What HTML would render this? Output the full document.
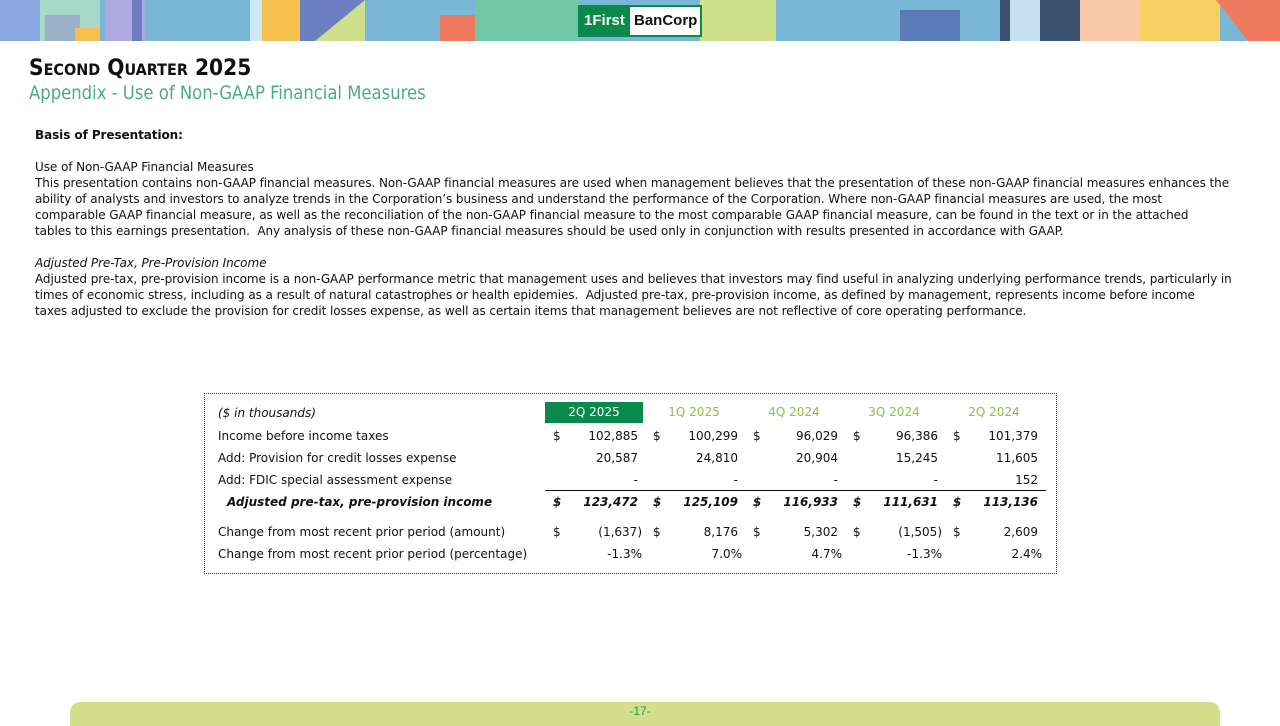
<!DOCTYPE html>
<html><head><meta charset="utf-8"><style>
*{margin:0;padding:0;box-sizing:border-box}
body{width:1280px;height:720px;position:relative;overflow:hidden;background:#fff;font-family:"DejaVu Sans","Liberation Sans",sans-serif;color:#111}
.b{position:absolute}
.ban{position:absolute;left:0;top:0;width:1280px;height:41px;overflow:hidden;background:#7ab6d6}
.t{position:absolute;white-space:nowrap;font-size:12px;letter-spacing:-0.07px}
.tb{position:absolute;left:204px;top:393px;width:853px;height:181px;border:1px dotted #333}
.c{position:absolute;font-size:12px;white-space:nowrap}
.r{text-align:right;width:90px}
.h{color:#8cc04a;width:98px;text-align:center}
</style></head><body>
<div class="ban">
<div class="b" style="left:0;top:0;width:40px;height:41px;background:#8aa8e0"></div>
<div class="b" style="left:40px;top:0;width:60px;height:41px;background:#a8d8c8"></div>
<div class="b" style="left:45px;top:15px;width:35px;height:26px;background:#9cb0c8"></div>
<div class="b" style="left:75px;top:28px;width:25px;height:13px;background:#f6c050"></div>
<div class="b" style="left:105px;top:0;width:40px;height:41px;background:#b0a8e0"></div>
<div class="b" style="left:132px;top:0;width:10px;height:41px;background:#6c7ec0"></div>
<div class="b" style="left:145px;top:0;width:105px;height:41px;background:#7ab6d6"></div>
<div class="b" style="left:250px;top:0;width:12px;height:41px;background:#d0e8f4"></div>
<div class="b" style="left:262px;top:0;width:38px;height:41px;background:#f6c050"></div>
<div class="b" style="left:300px;top:0;width:65px;height:41px;background:#6c7ec0"></div>
<div class="b" style="left:315px;top:0;width:50px;height:41px;background:#cfe08a;clip-path:polygon(100% 0,100% 100%,0 100%)"></div>
<div class="b" style="left:365px;top:0;width:110px;height:41px;background:#7ab6d6"></div>
<div class="b" style="left:440px;top:15px;width:40px;height:26px;background:#f07a60"></div>
<div class="b" style="left:475px;top:0;width:105px;height:41px;background:#70c8a8"></div>
<div class="b" style="left:700px;top:0;width:120px;height:41px;background:#cfe08a"></div>
<div class="b" style="left:776px;top:0;width:190px;height:41px;background:#7ab6d6"></div>
<div class="b" style="left:900px;top:10px;width:60px;height:31px;background:#5a7ab8"></div>
<div class="b" style="left:1000px;top:0;width:80px;height:41px;background:#3c5070"></div>
<div class="b" style="left:1010px;top:0;width:30px;height:41px;background:#c8e0f4"></div>
<div class="b" style="left:1080px;top:0;width:60px;height:41px;background:#f8c8a8"></div>
<div class="b" style="left:1140px;top:0;width:80px;height:41px;background:#f6d060"></div>
<div class="b" style="left:1200px;top:0;width:80px;height:41px;background:#f07a60;clip-path:polygon(20% 0,100% 0,100% 100%,60% 100%)"></div>
<div class="b" style="left:578px;top:5px;width:124px;height:32px;background:#fff;border:2px solid #0a8a4a"></div>
<div class="b" style="left:578px;top:5px;width:52px;height:32px;background:#0a8a4a;color:#fff;font:bold 15px 'Liberation Sans',sans-serif;line-height:32px;padding-left:6px">1First</div>
<div class="b" style="left:634px;top:5px;color:#111;font:bold 15px 'Liberation Sans',sans-serif;line-height:32px">BanCorp</div>
</div>
<div class="b" style="left:29px;top:55px;font-weight:bold;font-size:22.5px;font-variant:small-caps;font-family:'DejaVu Sans Condensed','DejaVu Sans',sans-serif">Second Quarter 2025</div>
<div class="b" style="left:29px;top:83px;font-size:18.3px;color:#4aab8a;font-family:'DejaVu Sans Condensed','DejaVu Sans',sans-serif">Appendix - Use of Non-GAAP Financial Measures</div>
<div class="t" style="left:35px;top:128px;font-weight:bold">Basis of Presentation:</div>
<div class="t" style="left:35px;top:160px">Use of Non-GAAP Financial Measures</div>
<div class="t" style="left:35px;top:176px">This presentation contains non-GAAP financial measures. Non-GAAP financial measures are used when management believes that the presentation of these non-GAAP financial measures enhances the</div>
<div class="t" style="left:35px;top:192px">ability of analysts and investors to analyze trends in the Corporation’s business and understand the performance of the Corporation. Where non-GAAP financial measures are used, the most</div>
<div class="t" style="left:35px;top:208px">comparable GAAP financial measure, as well as the reconciliation of the non-GAAP financial measure to the most comparable GAAP financial measure, can be found in the text or in the attached</div>
<div class="t" style="left:35px;top:224px">tables to this earnings presentation.&nbsp; Any analysis of these non-GAAP financial measures should be used only in conjunction with results presented in accordance with GAAP.</div>
<div class="t" style="left:35px;top:256px;font-style:italic">Adjusted Pre-Tax, Pre-Provision Income</div>
<div class="t" style="left:35px;top:272px">Adjusted pre-tax, pre-provision income is a non-GAAP performance metric that management uses and believes that investors may find useful in analyzing underlying performance trends, particularly in</div>
<div class="t" style="left:35px;top:288px">times of economic stress, including as a result of natural catastrophes or health epidemies.&nbsp; Adjusted pre-tax, pre-provision income, as defined by management, represents income before income</div>
<div class="t" style="left:35px;top:304px">taxes adjusted to exclude the provision for credit losses expense, as well as certain items that management believes are not reflective of core operating performance.</div>
<div class="tb"></div>
<div class="b" style="left:545px;top:402px;width:98px;height:21px;background:#0a8a4a"></div>
<div class="b" style="left:545px;top:490px;width:501px;height:1px;background:#111"></div>
<div class="c" style="left:218px;top:406px;font-style:italic">($ in thousands)</div>
<div class="c h" style="left:545px;top:405px;color:#fff">2Q 2025</div>
<div class="c h" style="left:645px;top:405px">1Q 2025</div>
<div class="c h" style="left:745px;top:405px">4Q 2024</div>
<div class="c h" style="left:845px;top:405px">3Q 2024</div>
<div class="c h" style="left:945px;top:405px">2Q 2024</div>
<div class="c" style="left:218px;top:429px">Income before income taxes</div>
<div class="c" style="left:218px;top:451px">Add: Provision for credit losses expense</div>
<div class="c" style="left:218px;top:473px">Add: FDIC special assessment expense</div>
<div class="c" style="left:227px;top:495px;font-weight:bold;font-style:italic">Adjusted pre-tax, pre-provision income</div>
<div class="c" style="left:218px;top:525px">Change from most recent prior period (amount)</div>
<div class="c" style="left:218px;top:547px">Change from most recent prior period (percentage)</div>
<div class="c" style="left:553px;top:429px">$</div><div class="c r" style="left:548px;top:429px">102,885</div>
<div class="c r" style="left:548px;top:451px">20,587</div><div class="c r" style="left:548px;top:473px">-</div>
<div class="c" style="left:553px;top:495px;font-weight:bold;font-style:italic">$</div><div class="c r" style="left:548px;top:495px;font-weight:bold;font-style:italic">123,472</div>
<div class="c" style="left:553px;top:525px">$</div><div class="c r" style="left:552px;top:525px">(1,637)</div>
<div class="c r" style="left:552px;top:547px">-1.3%</div>
<div class="c" style="left:653px;top:429px">$</div><div class="c r" style="left:648px;top:429px">100,299</div>
<div class="c r" style="left:648px;top:451px">24,810</div><div class="c r" style="left:648px;top:473px">-</div>
<div class="c" style="left:653px;top:495px;font-weight:bold;font-style:italic">$</div><div class="c r" style="left:648px;top:495px;font-weight:bold;font-style:italic">125,109</div>
<div class="c" style="left:653px;top:525px">$</div><div class="c r" style="left:648px;top:525px">8,176</div>
<div class="c r" style="left:652px;top:547px">7.0%</div>
<div class="c" style="left:753px;top:429px">$</div><div class="c r" style="left:748px;top:429px">96,029</div>
<div class="c r" style="left:748px;top:451px">20,904</div><div class="c r" style="left:748px;top:473px">-</div>
<div class="c" style="left:753px;top:495px;font-weight:bold;font-style:italic">$</div><div class="c r" style="left:748px;top:495px;font-weight:bold;font-style:italic">116,933</div>
<div class="c" style="left:753px;top:525px">$</div><div class="c r" style="left:748px;top:525px">5,302</div>
<div class="c r" style="left:752px;top:547px">4.7%</div>
<div class="c" style="left:853px;top:429px">$</div><div class="c r" style="left:848px;top:429px">96,386</div>
<div class="c r" style="left:848px;top:451px">15,245</div><div class="c r" style="left:848px;top:473px">-</div>
<div class="c" style="left:853px;top:495px;font-weight:bold;font-style:italic">$</div><div class="c r" style="left:848px;top:495px;font-weight:bold;font-style:italic">111,631</div>
<div class="c" style="left:853px;top:525px">$</div><div class="c r" style="left:852px;top:525px">(1,505)</div>
<div class="c r" style="left:852px;top:547px">-1.3%</div>
<div class="c" style="left:953px;top:429px">$</div><div class="c r" style="left:948px;top:429px">101,379</div>
<div class="c r" style="left:948px;top:451px">11,605</div><div class="c r" style="left:948px;top:473px">152</div>
<div class="c" style="left:953px;top:495px;font-weight:bold;font-style:italic">$</div><div class="c r" style="left:948px;top:495px;font-weight:bold;font-style:italic">113,136</div>
<div class="c" style="left:953px;top:525px">$</div><div class="c r" style="left:948px;top:525px">2,609</div>
<div class="c r" style="left:952px;top:547px">2.4%</div>
<div class="b" style="left:70px;top:702px;width:1150px;height:24px;background:#d4df8c;border-radius:10px 10px 0 0"></div>
<div class="b" style="left:0;top:704px;width:1280px;text-align:center;font:12px 'Liberation Sans',sans-serif;color:#1a9a4a">-17-</div>
</body></html>
